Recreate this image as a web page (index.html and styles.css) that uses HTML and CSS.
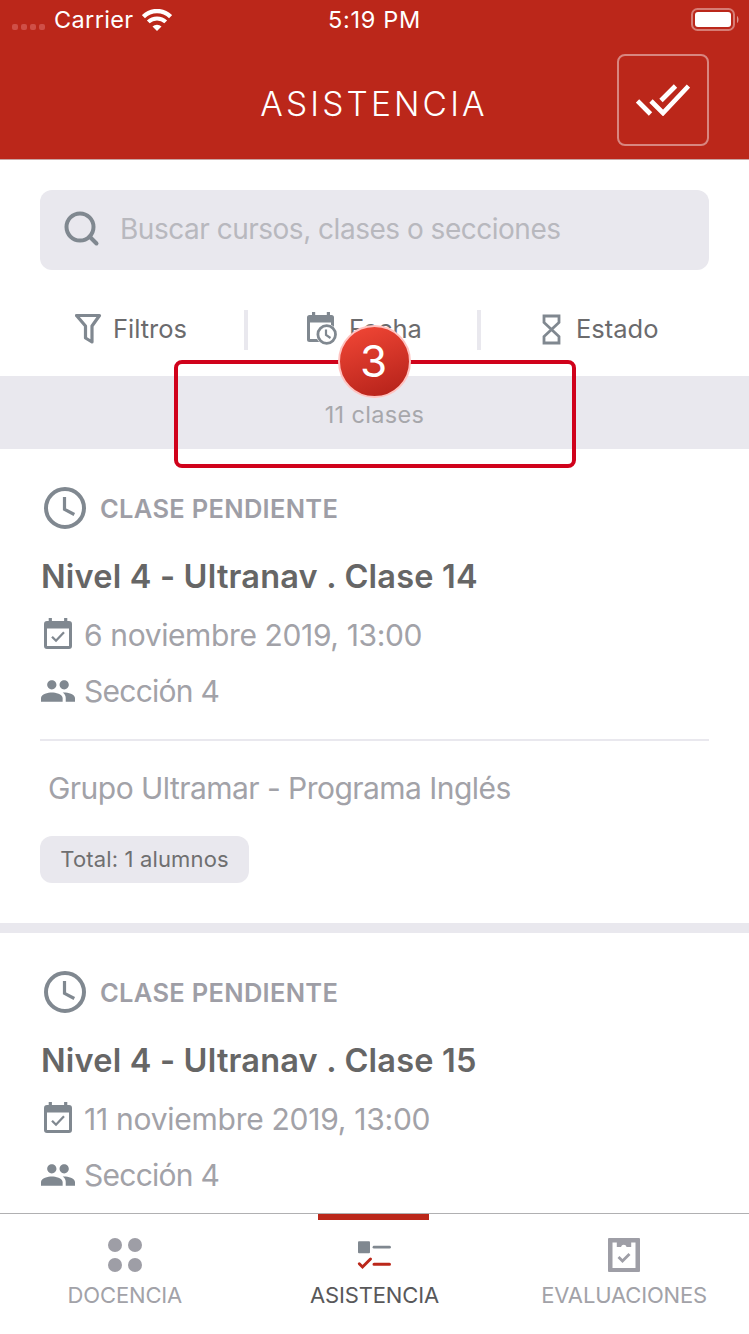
FILE: index.html
```html
<!DOCTYPE html>
<html lang="es">
<head>
<meta charset="utf-8">
<title>Asistencia</title>
<link rel="stylesheet" href="styles.css">
</head>
<body>
<svg width="0" height="0" class="defs">
  <symbol id="clock" viewBox="0 0 42 42"><circle cx="21" cy="21" r="19" fill="none" stroke="#808890" stroke-width="4"/><path d="M20.500 10v12.300l9.800 5.200" fill="none" stroke="#808890" stroke-width="3.200"/></symbol>
  <symbol id="cal" viewBox="0 0 28 31"><path fill="#808890" fill-rule="evenodd" d="M4.700 0h3.200v3h12.200V0h3.200v3H25a3 3 0 0 1 3 3v22a3 3 0 0 1-3 3H3a3 3 0 0 1-3-3V6a3 3 0 0 1 3-3h1.700zM3 10.500V28h22V10.500z"/><path d="M8 18.700l4 4 8-8.500" fill="none" stroke="#808890" stroke-width="2.300"/></symbol>
  <symbol id="people" viewBox="1 5 22 14"><path fill="#808890" d="M16 11c1.660 0 2.990-1.340 2.990-3S17.660 5 16 5c-1.660 0-3 1.340-3 3s1.340 3 3 3zm-8 0c1.660 0 2.990-1.340 2.990-3S9.660 5 8 5C6.340 5 5 6.340 5 8s1.340 3 3 3zm0 2c-2.330 0-7 1.170-7 3.500V19h14v-2.500c0-2.330-4.670-3.500-7-3.500zm8 0c-.290 0-.620.020-.970.050 1.160.840 1.970 1.970 1.970 3.450V19h6v-2.500c0-2.330-4.670-3.500-7-3.500z"/></symbol>
</svg>
<div class="screen">
  <header class="header">
    <div class="status-bar">
      <div class="carrier"><span class="dots"><i></i><i></i><i></i><i></i></span><span class="carrier-name">Carrier</span>
        <svg class="wifi" viewBox="0 0 30 22" width="30" height="22"><path d="M1.400 7.600a19.400 19.400 0 0 1 27.200 0" fill="none" stroke="#fff" stroke-width="4.400"/><path d="M6.300 12.900a12.500 12.500 0 0 1 17.400 0" fill="none" stroke="#fff" stroke-width="4"/><path d="M15 22l-4.500-4.600a6.600 6.600 0 0 1 9 0z" fill="#fff"/></svg>
      </div>
      <span class="time">5:19 PM</span>
      <svg class="battery" viewBox="0 0 48 23" width="48" height="23"><rect x="1" y="1" width="42" height="21" rx="5.500" fill="none" stroke="#fff" stroke-opacity=".4" stroke-width="2"/><rect x="4" y="4" width="36" height="15" rx="3" fill="#fff"/><path d="M46 8c2 1 2 6 0 7z" fill="#fff" fill-opacity=".5"/></svg>
    </div>
    <div class="nav">
      <h1 class="nav-title">ASISTENCIA</h1>
      <button class="check-all"><svg viewBox="0 0 54 32" width="54" height="32"><g fill="none" stroke="#fff" stroke-width="4.700"><path d="M1.500 17l13 13"/><path d="M15 17l12 12L52.500 2"/><path d="M39.500 2L25 16.500"/></g></svg></button>
    </div>
  </header>
  <div class="search"><svg viewBox="0 0 36 36" width="36" height="36"><g fill="none" stroke="#808890" stroke-width="4"><circle cx="16" cy="16" r="13.500"/><path d="M25.500 25.500L32.500 32.500" stroke-linecap="round"/></g></svg><span class="placeholder">Buscar cursos, clases o secciones</span></div>
  <div class="filters">
    <div class="filter f-filter"><svg viewBox="0 0 27 31" width="27" height="31"><path d="M2 2.500h23L17.500 13v16l-6.500-4V13z" transform="translate(-.5 0)" fill="none" stroke="#808890" stroke-width="3.200" stroke-linejoin="round"/></svg><span>Filtros</span></div>
    <i class="sep"></i>
    <div class="filter f-date"><svg viewBox="0 0 31 33" width="31" height="33"><path fill="#808890" fill-rule="evenodd" d="M5 0h3.200v3h11.600V0H23v3h1.500A2.500 2.500 0 0 1 27 5.500V30H2.500A2.500 2.500 0 0 1 0 27.500v-22A2.500 2.500 0 0 1 2.500 3H5zM3 10.500V27h21V10.500z"/><circle cx="19.700" cy="22.500" r="10.600" fill="#fff"/><circle cx="19.700" cy="22.500" r="8.800" fill="none" stroke="#808890" stroke-width="2.800"/><path d="M19 17.500v5.500l4.500 3" fill="none" stroke="#808890" stroke-width="2.200"/></svg><span>Fecha</span></div>
    <i class="sep"></i>
    <div class="filter f-state"><svg viewBox="0 0 19 31" width="19" height="31"><path d="M2 2h15v6.500L9.500 15.500 17 22.500V29H2v-6.500l7.500-7L2 8.500z" fill="none" stroke="#808890" stroke-width="2.800"/></svg><span>Estado</span></div>
  </div>
  <div class="count"><span>11 clases</span>
    <div class="callout"><span class="badge">3</span></div>
  </div>
  <main class="list">
    <article class="card">
      <div class="state"><svg width="42" height="42"><use href="#clock"/></svg><span>CLASE PENDIENTE</span></div>
      <h2 class="card-title">Nivel 4 - Ultranav . Clase 14</h2>
      <div class="row date"><svg width="28" height="31"><use href="#cal"/></svg><span>6 noviembre 2019, 13:00</span></div>
      <div class="row section"><svg width="34" height="22"><use href="#people"/></svg><span>Sección 4</span></div>
      <div class="rule"></div>
      <p class="group">Grupo Ultramar - Programa Inglés</p>
      <div class="pill"><span>Total: 1 alumnos</span></div>
    </article>
    <article class="card">
      <div class="state"><svg width="42" height="42"><use href="#clock"/></svg><span>CLASE PENDIENTE</span></div>
      <h2 class="card-title">Nivel 4 - Ultranav . Clase 15</h2>
      <div class="row date eleven"><svg width="28" height="31"><use href="#cal"/></svg><span>11 noviembre 2019, 13:00</span></div>
      <div class="row section"><svg width="34" height="22"><use href="#people"/></svg><span>Sección 4</span></div>
    </article>
  </main>
  <nav class="tabs">
    <a class="tab"><svg viewBox="0 0 34 34" width="34" height="34"><g fill="#9e9ea6"><circle cx="7" cy="7" r="7"/><circle cx="27" cy="7" r="7"/><circle cx="7" cy="27" r="7"/><circle cx="27" cy="27" r="7"/></g></svg><span>DOCENCIA</span></a>
    <a class="tab active"><svg viewBox="0 0 34 34" width="34" height="34"><rect x="1" y="3.300" width="12" height="12" rx="1" fill="#808890"/><path d="M17 9.200h15.500" stroke="#808890" stroke-width="2.800" stroke-linecap="round"/><path d="M17 26.300h15.500M2.300 25.800L5.500 29l8-8" fill="none" stroke="#bb271a" stroke-width="3" stroke-linecap="round"/></svg><span>ASISTENCIA</span></a>
    <a class="tab"><svg viewBox="0 0 32 34" width="32" height="34"><path fill="#9e9ea6" fill-rule="evenodd" d="M1 0h30a1 1 0 0 1 1 1v32a1 1 0 0 1-1 1H1a1 1 0 0 1-1-1V1a1 1 0 0 1 1-1zM4.500 4.500v25.500h23V4.500h-4.300V9h-4.600a2.900 2.900 0 0 0-5.600 0H8.800V4.500z"/><path d="M10.500 19l4 4 7-7" fill="none" stroke="#9e9ea6" stroke-width="2.800"/></svg><span>EVALUACIONES</span></a>
  </nav>
</div>
</body>
</html>
```
FILE: styles.css
```css
* { box-sizing: border-box; margin: 0; padding: 0; }
body { font-family: Inter, "Liberation Sans", sans-serif; background: #fff; }
.defs { position: absolute; }
svg { display: block; flex: none; }
span, h1, h2, p { white-space: nowrap; }
.screen { width: 749px; height: 1334px; overflow: hidden; display: flex; flex-direction: column; }

.header { height: 160px; flex: none; background: #bb271a; border-bottom: 1px solid #c9a5a3; color: #fff; }
.status-bar { height: 39px; display: grid; grid-template-columns: 1fr auto 1fr; align-items: center; padding: 0 10px 0 12px; font-size: 23.500px; }
.carrier { display: flex; align-items: center; }
.dots { display: flex; gap: 3px; padding-top: 15px; }
.dots i { width: 6px; height: 6px; border-radius: 2px; background: #cf4f47; }
.carrier-name { margin-left: 9px; letter-spacing: .350px; }
.wifi { margin-left: 9px; margin-top: 1px; }
.time { letter-spacing: .7px; margin-right: 2px; }
.battery { justify-self: end; }
.nav { height: 120px; padding: 15px 40px 0; display: grid; grid-template-columns: 92px 1fr 92px; }
.nav-title { grid-column: 2; font-size: 33.500px; font-weight: 350; letter-spacing: 3.150px; padding-right: 1px; text-align: center; line-height: 101px; }
.check-all { grid-column: 3; width: 92px; height: 92px; border: 2px solid #d88680; border-radius: 8px; background: none; display: grid; place-items: center; }

.search { height: 80px; flex: none; margin: 30px 40px 0; padding: 0 0 2px 24px; border-radius: 12px; background: #e9e8ee; display: flex; align-items: center; gap: 20px; color: #b8b8be; font-size: 28px; letter-spacing: -.490px; }
.filters { height: 106px; flex: none; padding: 13px 0 0 75px; display: flex; align-items: center; color: #6b6b6d; font-size: 25.500px; }
.filter { display: flex; align-items: center; margin-bottom: 2px; }
.f-filter { width: 169px; gap: 11px; }
.f-date { width: 229px; padding-left: 59px; gap: 11px; }
.f-state { padding-left: 61px; gap: 15px; }
.f-state svg { margin-top: 2px; }
.sep { width: 4px; height: 40px; background: #e9e8ee; flex: none; }

.count { height: 73px; flex: none; position: relative; background: #e9e8ee; display: flex; align-items: center; justify-content: center; padding-top: 4px; color: #a7a7ab; font-size: 23.500px; letter-spacing: .350px; }
.callout { position: absolute; left: 174px; top: -16px; width: 402px; height: 108px; border: 4px solid #d0021b; border-radius: 8px; }
.badge { position: absolute; left: 160px; top: -39px; width: 73px; height: 73px; border: 2px solid #ffc3c0; border-radius: 50%; background: linear-gradient(160deg, #f04635 5%, #b5221a 95%); color: #fff; font-size: 44px; letter-spacing: 0; line-height: 69px; padding-right: 2px; text-align: center; }

.list { flex: 1; min-height: 0; overflow: hidden; }
.card { height: 484px; padding: 38px 40px 0; border-bottom: 10px solid #e9e8ee; }
.state { display: flex; align-items: center; gap: 14px; padding-left: 4px; height: 42px; color: #9e9ea6; font-weight: 600; font-size: 25.500px; letter-spacing: .300px; }
.card-title { margin: 19px 0 3px; padding-left: 1px; line-height: 57px; height: 56px; font-size: 32.500px; font-weight: 600; letter-spacing: .190px; color: #666; }
.row { height: 56px; display: flex; align-items: center; color: #a2a2a8; font-size: 30px; }
.date { gap: 12px; padding-left: 4px; letter-spacing: -.380px; }
.date svg { margin-bottom: 4px; }
.eleven { letter-spacing: -.260px; }
.section { gap: 9px; padding-left: 1px; letter-spacing: -.750px; }
.rule { height: 2px; margin-top: 20px; background: #e9e8ee; }
.group { padding-left: 8px; line-height: 95px; color: #a2a2a8; font-size: 30px; letter-spacing: -.540px; }
.pill { width: 209px; height: 47px; border-radius: 12px; background: #e9e8ee; display: flex; align-items: center; justify-content: center; padding-bottom: 1px; color: #6f6f70; font-size: 22px; letter-spacing: .150px; }

.tabs { height: 121px; flex: none; border-top: 1px solid #b0b0b2; background: #fff; display: grid; grid-template-columns: repeat(3, 1fr); }
.tab { position: relative; padding-top: 24px; display: flex; flex-direction: column; align-items: center; gap: 6px; color: #a2a2a8; font-size: 22px; letter-spacing: -.150px; line-height: 34px; }
.tab.active { color: #58585a; }
.tab.active::before { content: ""; position: absolute; top: 0; left: 68px; width: 111px; height: 6px; background: #bb271a; }
```
